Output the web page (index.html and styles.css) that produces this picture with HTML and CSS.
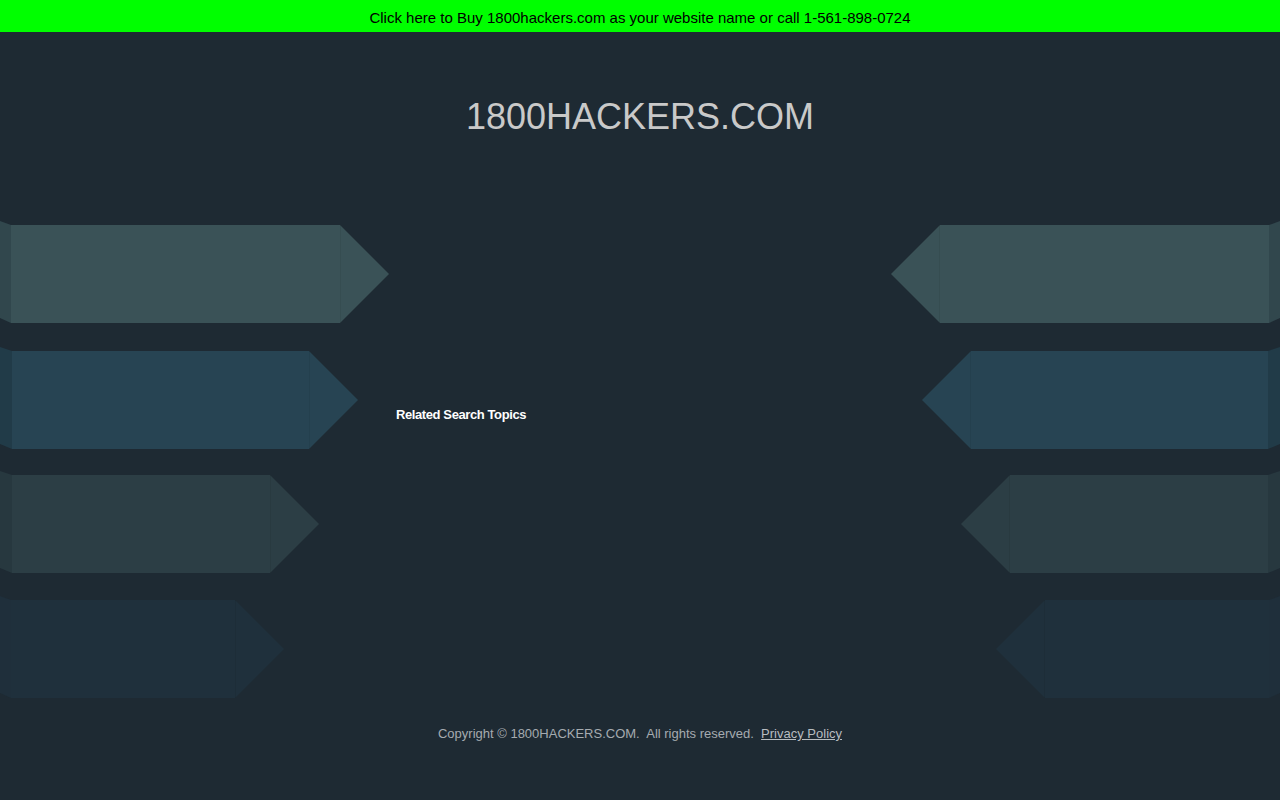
FILE: index.html
```html
<!DOCTYPE html>
<html lang="en">
<head>
<meta charset="utf-8">
<title>1800HACKERS.COM</title>
<link rel="stylesheet" href="styles.css">
</head>
<body>
<a class="topbar" href="#">Click here to Buy 1800hackers.com as your website name or call 1-561-898-0724</a>
<h1 class="title">1800HACKERS.COM</h1>
<div class="stage">
  <div class="col col-left">
    <svg class="arrow" width="390" height="102" viewBox="0 0 390 102"><polygon class="a1" points="11,4 340,4 389,53 340,102 11,102"/><polygon class="s1" points="0,0 11,4 11,102 0,97"/><line class="seam" x1="340.5" y1="4" x2="340.5" y2="102"/></svg>
    <svg class="arrow r2" width="359" height="102" viewBox="0 0 359 102"><polygon class="a2" points="12,4 309,4 358,53 309,102 12,102"/><polygon class="s2" points="0,0 12,4 12,102 0,97"/><line class="seam" x1="309.5" y1="4" x2="309.5" y2="102"/></svg>
    <svg class="arrow" width="320" height="102" viewBox="0 0 320 102"><polygon class="a3" points="12,4 270,4 319,53 270,102 12,102"/><polygon class="s3" points="0,0 12,4 12,102 0,97"/><line class="seam" x1="270.5" y1="4" x2="270.5" y2="102"/></svg>
    <svg class="arrow" width="285" height="102" viewBox="0 0 285 102"><polygon class="a4" points="11,4 235,4 284,53 235,102 11,102"/><polygon class="s4" points="0,0 11,4 11,102 0,97"/><line class="seam" x1="235.5" y1="4" x2="235.5" y2="102"/></svg>
  </div>
  <div class="center">
    <h2 class="related">Related Search Topics</h2>
  </div>
  <div class="col col-right">
    <svg class="arrow flip" width="390" height="102" viewBox="0 0 390 102"><polygon class="a1" points="11,4 340,4 389,53 340,102 11,102"/><polygon class="s1" points="0,0 11,4 11,102 0,97"/><line class="seam" x1="340.5" y1="4" x2="340.5" y2="102"/></svg>
    <svg class="arrow flip r2" width="359" height="102" viewBox="0 0 359 102"><polygon class="a2" points="12,4 309,4 358,53 309,102 12,102"/><polygon class="s2" points="0,0 12,4 12,102 0,97"/><line class="seam" x1="309.5" y1="4" x2="309.5" y2="102"/></svg>
    <svg class="arrow flip" width="320" height="102" viewBox="0 0 320 102"><polygon class="a3" points="12,4 270,4 319,53 270,102 12,102"/><polygon class="s3" points="0,0 12,4 12,102 0,97"/><line class="seam" x1="270.5" y1="4" x2="270.5" y2="102"/></svg>
    <svg class="arrow flip" width="285" height="102" viewBox="0 0 285 102"><polygon class="a4" points="11,4 235,4 284,53 235,102 11,102"/><polygon class="s4" points="0,0 11,4 11,102 0,97"/><line class="seam" x1="235.5" y1="4" x2="235.5" y2="102"/></svg>
  </div>
</div>
<footer class="footer">Copyright © 1800HACKERS.COM.&nbsp; All rights reserved.&nbsp; <a class="privacy" href="#">Privacy Policy</a></footer>
</body>
</html>
```
FILE: styles.css
```css
html, body {
  margin: 0;
  padding: 0;
}
body {
  background: #1e2a33;
  font-family: "Liberation Sans", Arial, sans-serif;
  height: 800px;
  overflow: hidden;
}
.topbar {
  display: block;
  height: 32px;
  line-height: 35px;
  background: #00ff00;
  color: #000;
  text-align: center;
  font-size: 15px;
  text-decoration: none;
}
.title {
  margin: 64px 0 0;
  font-size: 36px;
  font-weight: normal;
  line-height: 41px;
  color: #c9c9c9;
  text-align: center;
}
.stage {
  margin-top: 84px;
  display: flex;
  justify-content: space-between;
}
.col {
  width: 390px;
  display: flex;
  flex-direction: column;
  gap: 23px;
}
.col-right {
  align-items: flex-end;
}
.arrow {
  display: block;
}
.r2 {
  margin-top: 1px;
  margin-bottom: -1px;
}
.flip {
  transform: scaleX(-1);
}
.a1 { fill: #3a5257; }
.s1 { fill: #31474d; }
.a2 { fill: #274453; }
.s2 { fill: #213b48; }
.a3 { fill: #2c3e45; }
.s3 { fill: #27383f; }
.a4 { fill: #1f303c; }
.s4 { fill: #1f2f3b; }
.seam {
  stroke: #000;
  stroke-opacity: 0.06;
  stroke-width: 1;
}
.center {
  flex: 1;
  padding: 186px 0 0 6px;
}
.related {
  margin: 0;
  font-size: 13px;
  line-height: 15px;
  font-weight: bold;
  color: #ffffff;
  letter-spacing: -0.4px;
}
.footer {
  margin-top: 28px;
  text-align: center;
  font-size: 13px;
  line-height: 15px;
  color: #a5abb0;
}
.privacy {
  color: #b7bcc0;
  text-decoration: underline;
}
```
